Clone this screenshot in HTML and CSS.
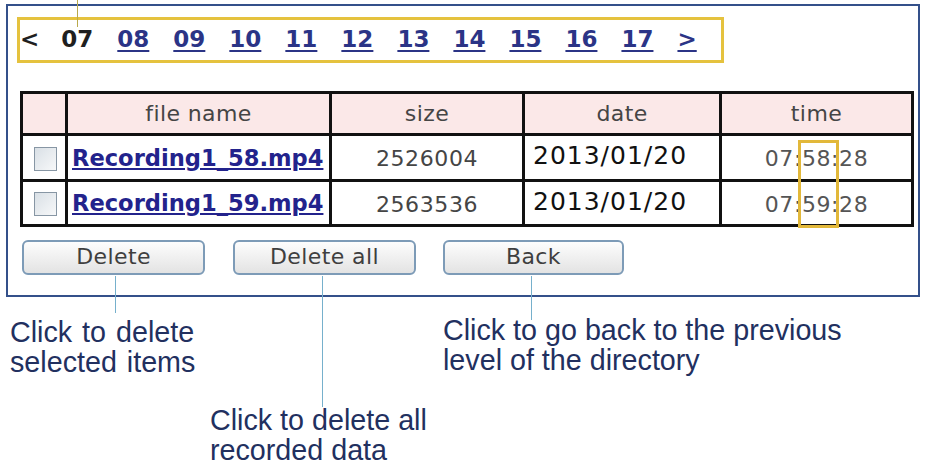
FILE: index.html
```html
<!DOCTYPE html>
<html lang="en">
<head>
<meta charset="utf-8">
<title>Recording list</title>
<link rel="stylesheet" href="styles.css">
</head>
<body>
<div class="page">
  <div class="frame">
    <div class="pager">
      <span class="nav">&lt;</span>
      <span class="current">07</span>
      <a class="plink" href="#">08</a>
      <a class="plink" href="#">09</a>
      <a class="plink" href="#">10</a>
      <a class="plink" href="#">11</a>
      <a class="plink" href="#">12</a>
      <a class="plink" href="#">13</a>
      <a class="plink" href="#">14</a>
      <a class="plink" href="#">15</a>
      <a class="plink" href="#">16</a>
      <a class="plink" href="#">17</a>
      <a class="plink" href="#">&gt;</a>
    </div>
    <table class="files">
      <tr class="head">
        <td class="c-check"></td>
        <td class="c-name">file name</td>
        <td class="c-size">size</td>
        <td class="c-date">date</td>
        <td class="c-time">time</td>
      </tr>
      <tr class="row1">
        <td class="c-check"><span class="box"></span></td>
        <td class="c-name"><a class="flink" href="#">Recording1_58.mp4</a></td>
        <td class="c-size">2526004</td>
        <td class="c-date d-val">2013/01/20</td>
        <td class="c-time">07:58:28</td>
      </tr>
      <tr class="row2">
        <td class="c-check"><span class="box"></span></td>
        <td class="c-name"><a class="flink" href="#">Recording1_59.mp4</a></td>
        <td class="c-size">2563536</td>
        <td class="c-date d-val">2013/01/20</td>
        <td class="c-time">07:59:28</td>
      </tr>
    </table>
    <div class="buttons">
      <button class="btn b1">Delete</button>
      <button class="btn b2">Delete all</button>
      <button class="btn b3">Back</button>
    </div>
  </div>
  <div class="notes">
    <p class="note n-del">Click to delete<br>selected items</p>
    <p class="note n-back">Click to go back to the previous<br>level of the directory</p>
    <p class="note n-all">Click to delete all<br>recorded data</p>
  </div>
  <span class="lead lead-top"></span>
  <span class="lead lead-del"></span>
  <span class="lead lead-all"></span>
  <span class="lead lead-back"></span>
  <span class="timebox"></span>
</div>
</body>
</html>
```
FILE: styles.css
```css
* { box-sizing: border-box; }
html, body { margin: 0; padding: 0; background: #ffffff; }
.page {
  position: relative;
  width: 932px;
  height: 467px;
  overflow: hidden;
  font-family: "DejaVu Sans", Verdana, sans-serif;
}
.frame {
  margin: 4px 0 0 6px;
  width: 914px;
  height: 293px;
  border: 2px solid #34508a;
  padding: 11px 0 0 9px;
}
.pager {
  width: 707px;
  height: 46px;
  border: 3px solid #e5c23e;
  display: flex;
  align-items: center;
  gap: 24px;
  padding: 0 0 2px 0;
  font-size: 23px;
  font-weight: bold;
  color: #1f1f1f;
}
.nav { margin-right: -2px; }
.plink {
  color: #2b3486;
  text-decoration: underline;
  text-decoration-thickness: 2px;
  text-underline-offset: 3px;
}
.files {
  margin: 28px 0 0 3px;
  border-collapse: separate;
  border-spacing: 0;
  border-left: 3px solid #111;
  border-top: 3px solid #111;
  width: 894px;
  table-layout: fixed;
}
.files td {
  border-right: 3px solid #111;
  border-bottom: 3px solid #111;
  padding: 0;
  vertical-align: middle;
  font-size: 22px;
  color: #454545;
  text-align: center;
  white-space: nowrap;
  overflow: hidden;
}
.c-check { width: 45px; }
.c-name { width: 264px; }
.c-size { width: 193px; }
.c-date { width: 197px; }
.c-time { width: 192px; }
.head td { background: #fbe8e8; height: 42px; letter-spacing: 0.4px; }
.row1 td { height: 46px; }
.row2 td { height: 45px; }
.row1 .c-name, .row2 .c-name { text-align: left; padding-left: 4px; }
.row1 .c-size, .row2 .c-size { letter-spacing: 0.6px; padding-top: 2px; }
.files td.d-val {
  vertical-align: top;
  text-align: left;
  padding: 5px 0 0 8px;
  font-size: 25px;
  letter-spacing: 1px;
  color: #111;
}
.row1 .c-time, .row2 .c-time { letter-spacing: 0.6px; color: #555; padding-top: 2px; }
.box {
  display: inline-block;
  width: 23px;
  height: 24px;
  border: 1px solid #8796a4;
  background: linear-gradient(135deg, #d9e0e6, #f7f8f9);
  vertical-align: middle;
  margin-left: 2px;
}
.flink {
  font-weight: bold;
  font-size: 22.6px;
  color: #23238c;
  text-decoration: underline;
  text-decoration-thickness: 2px;
  text-underline-offset: 2px;
}
.buttons {
  display: flex;
  gap: 27px;
  margin: 13px 0 0 5px;
}
.btn {
  height: 35px;
  border: 2px solid #7d9bb7;
  border-radius: 6px;
  background: linear-gradient(#fdfdfd, #e3e3e3);
  font-family: "DejaVu Sans", Verdana, sans-serif;
  font-size: 22px;
  letter-spacing: 0.4px;
  color: #3f3f3f;
  padding: 0 0 2px 0;
}
.b1 { width: 183px; }
.b2 { width: 183px; margin-left: 1px; }
.b3 { width: 181px; }
.notes {
  display: grid;
  grid-template-columns: 200px 233px 1fr;
  grid-template-rows: 90px auto;
  padding: 18px 0 0 10px;
  font-family: "Liberation Sans", Arial, sans-serif;
  font-size: 28.7px;
  line-height: 30px;
  color: #22305f;
}
.note { margin: 0; white-space: nowrap; }
.n-del { grid-column: 1 / 3; grid-row: 1; margin-top: 2px; word-spacing: 2px; }
.n-back { grid-column: 3; grid-row: 1; }
.n-all { grid-column: 2 / 4; grid-row: 2; }
.lead {
  position: absolute;
  width: 1px;
  background: #76b0cc;
}
.lead-top { left: 77px; top: 0; height: 27px; background: #b9a94c; }
.lead-del { left: 115px; top: 276px; height: 37px; }
.lead-all { left: 322px; top: 276px; height: 131px; }
.lead-back { left: 531px; top: 276px; height: 44px; }
.timebox {
  position: absolute;
  left: 798px;
  top: 140px;
  width: 41px;
  height: 88px;
  border: 3px solid #e2b83a;
}
```
